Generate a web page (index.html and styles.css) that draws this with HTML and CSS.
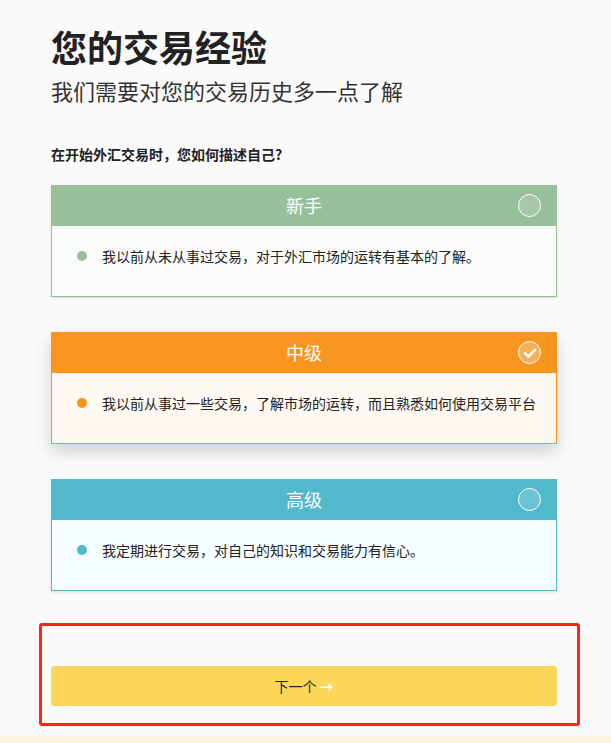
FILE: index.html
```html
<!DOCTYPE html>
<html>
<head>
    <meta charset="UTF-8">
    <title>您的交易经验</title>
    <link rel="stylesheet" href="styles.css">
</head>
<body>
    <div class="page">
        <h1 class="title">您的交易经验</h1>
        <p class="subtitle">我们需要对您的交易历史多一点了解</p>

        <p class="question">在开始外汇交易时，您如何描述自己?</p>

        <div class="levels">
            <div class="level level-new">
                <div class="level-head">
                    <span class="level-name">新手</span>
                    <span class="check"></span>
                </div>
                <div class="level-body">
                    <span class="dot"></span>
                    <span>我以前从未从事过交易，对于外汇市场的运转有基本的了解。</span>
                </div>
            </div>

            <div class="level level-mid selected">
                <div class="level-head">
                    <span class="level-name">中级</span>
                    <span class="check">
                        <svg width="24" height="24" viewBox="0 0 24 24">
                            <path d="M7 12.3l3.4 3.3 6.6-6.8" fill="none" stroke="#fff" stroke-width="2.6" stroke-linecap="round" stroke-linejoin="round"/>
                        </svg>
                    </span>
                </div>
                <div class="level-body">
                    <span class="dot"></span>
                    <span>我以前从事过一些交易，了解市场的运转，而且熟悉如何使用交易平台</span>
                </div>
            </div>

            <div class="level level-pro">
                <div class="level-head">
                    <span class="level-name">高级</span>
                    <span class="check"></span>
                </div>
                <div class="level-body">
                    <span class="dot"></span>
                    <span>我定期进行交易，对自己的知识和交易能力有信心。</span>
                </div>
            </div>
        </div>

        <div class="actions">
            <button class="next-btn">下一个 <span class="arrow">→</span></button>
        </div>
    </div>
    <div class="bottom-bar"></div>
</body>
</html>
```

FILE: styles.css
```css
body {
    margin: 0;
    background-color: #fafafa;
    font-family: "Noto Sans CJK SC", "Noto Sans", sans-serif;
    color: #333;
}
.page {
    width: 506px;
    padding: 24px 0 0 51px;
}
.title {
    font-size: 36px;
    line-height: 44px;
    font-weight: bold;
    color: #222;
    margin: 0 0 7px;
}
.subtitle {
    font-size: 22px;
    line-height: 30px;
    margin: 0;
    color: #333;
}
.question {
    font-size: 14px;
    line-height: 20px;
    font-weight: bold;
    color: #222;
    margin: 39px 0 21px;
}
.levels {
    display: flex;
    flex-direction: column;
    gap: 35px;
}
.level {
    border: 1px solid;
    box-shadow: 0 1px 3px rgba(0, 0, 0, 0.12);
}
.level.selected {
    box-shadow: 0 8px 16px rgba(0, 0, 0, 0.16);
}
.level-head {
    height: 40px;
    display: flex;
    align-items: center;
    justify-content: center;
    position: relative;
    color: #fff;
}
.level-name {
    font-size: 18px;
    margin-top: -2px;
}
.check {
    position: absolute;
    right: 15px;
    top: 8px;
    width: 21px;
    height: 21px;
    border: 1.5px solid #fff;
    border-radius: 50%;
    background-color: rgba(255, 255, 255, 0.15);
}
.check svg {
    display: block;
    margin: -1.5px;
}
.level-body {
    height: 70px;
    box-sizing: border-box;
    display: flex;
    align-items: flex-start;
    padding: 20px 0 0 25px;
    font-size: 14px;
    line-height: 20px;
    color: #222;
}
.dot {
    width: 10px;
    height: 10px;
    border-radius: 50%;
    margin: 5px 15px 0 0;
    flex-shrink: 0;
}
.level-new { border-color: #97bf9a; }
.level-new .level-head { background-color: #97bf9a; }
.level-new .level-body { background-color: #fafdfb; }
.level-new .dot { background-color: #97bf9a; }

.level-mid { border-color: #f7951f; }
.level-mid .level-head { background-color: #f7951f; }
.level-mid .level-body { background-color: #fff9f3; }
.level-mid .dot { background-color: #f7951f; }
.level-mid .check { background-color: rgba(255, 255, 255, 0.25); }

.level-pro { border-color: #52b9cc; }
.level-pro .level-head { background-color: #52b9cc; }
.level-pro .level-body { background-color: #f6fdfe; }
.level-pro .dot { background-color: #52b9cc; }

.actions {
    margin: 32px 0 0 -12px;
    width: 506px;
    padding: 40px 20px 17px 9px;
    border: 3px solid #ff2216;
    border-radius: 3px;
}
.next-btn {
    display: block;
    width: 100%;
    height: 40px;
    border: none;
    border-radius: 3px;
    background-color: #fdd75a;
    font-family: "Noto Sans CJK SC", "Noto Sans", sans-serif;
    font-size: 14px;
    color: #222;
    cursor: pointer;
}
.arrow {
    color: #fff;
    font-weight: bold;
}
.bottom-bar {
    margin-top: 10px;
    height: 40px;
    background-color: #fbf3dc;
}
```
